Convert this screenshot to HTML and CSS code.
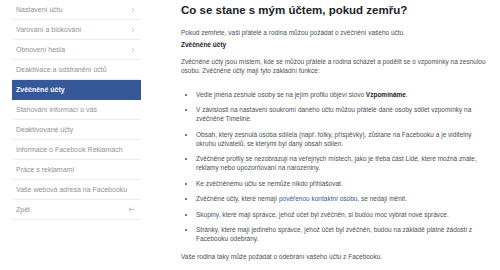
FILE: index.html
```html
<!DOCTYPE html>
<html>
<head>
<meta charset="utf-8">
<link rel="stylesheet" href="styles.css">
</head>
<body>
<div class="page">
  <ul class="nav">
    <li>Nastavení účtu <span class="chev"><svg width="4" height="6" viewBox="0 0 4 6"><path d="M1 1l2 2-2 2" fill="none" stroke="#c4c7cc" stroke-width="0.9"/></svg></span></li>
    <li>Varování a blokování <span class="chev"><svg width="4" height="6" viewBox="0 0 4 6"><path d="M1 1l2 2-2 2" fill="none" stroke="#c4c7cc" stroke-width="0.9"/></svg></span></li>
    <li>Obnovení hesla <span class="chev"><svg width="4" height="6" viewBox="0 0 4 6"><path d="M1 1l2 2-2 2" fill="none" stroke="#c4c7cc" stroke-width="0.9"/></svg></span></li>
    <li>Deaktivace a odstranění účtů</li>
    <li class="active">Zvěčněné účty</li>
    <li>Stahování informací o vás</li>
    <li>Deaktivované účty</li>
    <li>Informace o Facebook Reklamách</li>
    <li>Práce s reklamami</li>
    <li>Vaše webová adresa na Facebooku</li>
    <li>Zpět <span class="chev back"><svg width="7" height="5" viewBox="0 0 7 5"><path d="M6.5 2.5H1M3 0.7L1 2.5l2 1.8" fill="none" stroke="#b0b3b8" stroke-width="0.9"/></svg></span></li>
  </ul>
  <div class="content">
    <h1>Co se stane s mým účtem, pokud zemřu?</h1>
    <p class="lead">Pokud zemřete, vaši přátelé a rodina můžou požádat o zvěčnění vašeho účtu.</p>
    <h3>Zvěčněné účty</h3>
    <p class="intro">Zvěčněné účty jsou místem, kde se můžou přátelé a rodina scházet a podělit se o vzpomínky na zesnulou osobu. Zvěčněné účty mají tyto základní funkce:</p>
    <ul class="features">
      <li>Vedle jména zesnulé osoby se na jejím profilu objeví slovo <b>Vzpomínáme</b>.</li>
      <li>V závislosti na nastavení soukromí daného účtu můžou přátelé dané osoby sdílet vzpomínky na zvěčněné Timeline.</li>
      <li>Obsah, který zesnulá osoba sdílela (např. fotky, příspěvky), zůstane na Facebooku a je viditelný okruhu uživatelů, se kterými byl daný obsah sdílen.</li>
      <li>Zvěčněné profily se nezobrazují na veřejných místech, jako je třeba část Lidé, které možná znáte, reklamy nebo upozorňování na narozeniny.</li>
      <li>Ke zvěčněnému účtu se nemůže nikdo přihlašovat.</li>
      <li>Zvěčněné účty, které nemají <a href="#">pověřenou kontaktní osobu</a>, se nedají měnit.</li>
      <li>Skupiny, které mají správce, jehož účet byl zvěčněn, si budou moc vybrat nové správce.</li>
      <li>Stránky, které mají jediného správce, jehož účet byl zvěčněn, budou na základě platné žádosti z Facebooku odebrány.</li>
    </ul>
    <p class="outro">Vaše rodina taky může požádat o odebrání vašeho účtu z Facebooku.</p>
  </div>
</div>
</body>
</html>
```
FILE: styles.css
```css
body
{
	margin: 0;
	background-color: #fff;
	font-family: "Liberation Sans", Arial, Helvetica, sans-serif;
}
.page
{
	display: flex;
	align-items: flex-start;
}
.nav
{
	list-style: none;
	margin: 0 0 0 12px;
	padding: 0;
	width: 129px;
	flex-shrink: 0;
}
.nav li
{
	box-sizing: border-box;
	height: 20px;
	display: flex;
	align-items: center;
	justify-content: space-between;
	padding: 0 6px 0 4px;
	border-bottom: 1px solid #eceef1;
	font-size: 7px;
	color: #909296;
}
.nav li.active
{
	background-color: #365899;
	color: #fff;
	font-weight: bold;
	border-bottom-color: #365899;
}
.chev
{
	display: flex;
}
.content
{
	margin-left: 40px;
	width: 312px;
	color: #4b4f56;
	font-size: 6.5px;
	line-height: 9px;
}
h1
{
	margin: 4px 0 0 0;
	font-size: 11.5px;
	line-height: 12px;
	color: #1d2129;
}
.lead
{
	margin: 11.5px 0 0 0;
}
h3
{
	margin: 3px 0 0 0;
	font-size: 6.5px;
	line-height: 9px;
	color: #1d2129;
}
.intro
{
	margin: 8px 0 0 0;
}
.features
{
	margin: 15px 0 0 0;
	padding-left: 15px;
	padding-right: 14px;
}
.features li
{
	margin-bottom: 6.5px;
}
.features b
{
	color: #1d2129;
}
.features a
{
	color: #365899;
	text-decoration: none;
}
.outro
{
	margin: 9px 0 0 0;
}
```
